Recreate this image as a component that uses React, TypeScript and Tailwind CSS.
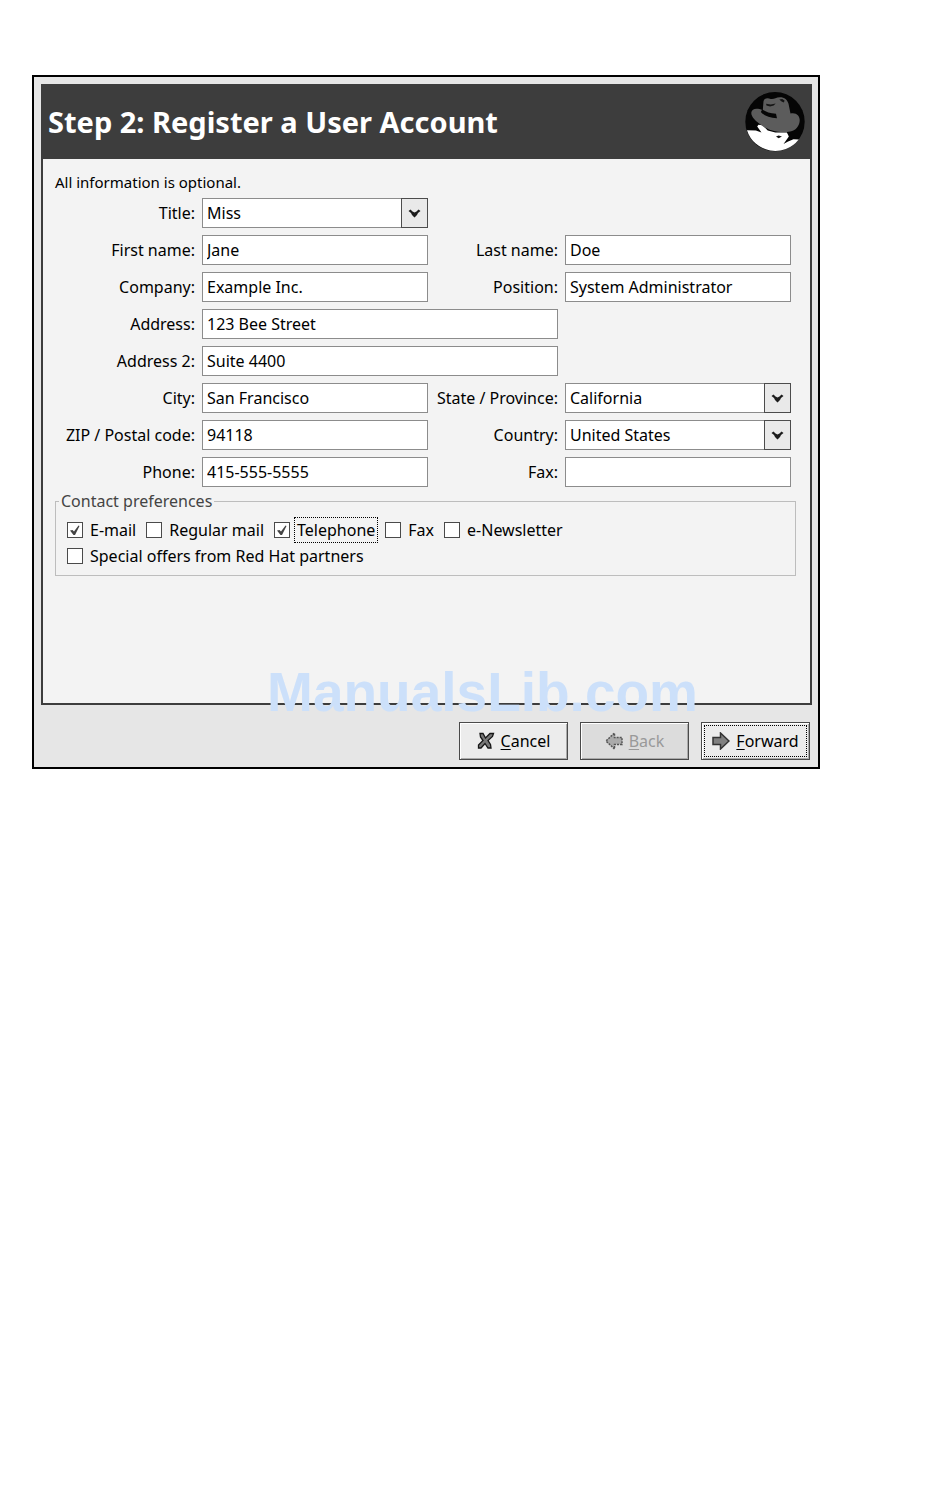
import React from 'react';

interface FieldProps {
    id: string;
    label: string;
    value: string;
    className?: string;
}

const labelClass = 'text-right whitespace-nowrap';
const boxClass =
    'h-[30px] w-full min-w-0 appearance-none rounded-none border border-[#8c8c8c] bg-white px-1 text-black outline-none';

const TextField: React.FC<FieldProps> = ({ id, label, value, className }) => (
    <>
        <label htmlFor={id} className={labelClass}>{label}</label>
        <input id={id} type="text" defaultValue={value} className={`${boxClass} ${className ?? ''}`} />
    </>
);

const SelectField: React.FC<FieldProps> = ({ id, label, value }) => (
    <>
        <label htmlFor={id} className={labelClass}>{label}</label>
        <div className="relative">
            <select id={id} defaultValue={value} className={`${boxClass} block`}>
                <option>{value}</option>
            </select>
            <span className="pointer-events-none absolute inset-y-0 right-0 flex w-[27px] items-center justify-center border border-[#4c4c4c] bg-[#e9e9e9]">
                <svg width="13" height="9" viewBox="0 0 13 9" fill="#1c1c1c">
                    <path d="M0.500 2 L2.500 0.500 L4.500 2.500 L6.500 3.500 L8.500 2.500 L10.500 0.500 L12.500 2 L10 4 L9 6 L6.500 8.500 L4 6 L3 4Z" />
                </svg>
            </span>
        </div>
    </>
);

interface CheckProps {
    label: string;
    checked?: boolean;
    focused?: boolean;
}

const Check: React.FC<CheckProps> = ({ label, checked, focused }) => (
    <label className="flex items-center gap-1">
        <span className="relative block size-4">
            <input
                type="checkbox"
                defaultChecked={checked}
                className="peer block size-4 appearance-none border border-[#4a4a4a] bg-white"
            />
            <svg viewBox="0 0 16 16" className="pointer-events-none absolute inset-0 hidden size-4 peer-checked:block">
                <path d="M3 8.500 L5.500 8 L7 9.500 L11.500 3.500 L12.500 4 L8 13 L6.500 13Z" fill="#444" />
            </svg>
        </span>
        <span className={`border border-dotted px-0.5 leading-6 ${focused ? 'border-black' : 'border-transparent'}`}>
            {label}
        </span>
    </label>
);

const HatLogo = () => (
    <svg viewBox="43 63 182 182" className="size-[60px] shrink-0" aria-hidden="true">
        <circle cx="134" cy="153" r="90" fill="#050505" />
        <path d="M49 179 L76 180 L93 186 L80 168 L84 162 L96 164 L112 180 L135 186 L170 186 L176 198 L160 221 L172 214 L190 206 L206 207 A90 90 0 0 1 49 179Z" fill="#fff" />
        <path d="M97 118 L99 92 C101 82 110 80 121 84 C131 86 136 79 149 79 C163 79 172 87 175 99 L181 128 C198 124 209 134 209 148 C209 166 196 181 180 183 C150 188 118 181 96 166 C76 152 62 140 62 126 C64 113 78 111 97 118Z" fill="#5c5c5c" />
        <path d="M95 116 C106 123 120 128 137 129 L140 143 C119 142 101 136 91 124Z" fill="#050505" />
        <path d="M107 99 L121 101 L136 98 L130 104 L119 107 L108 104Z M147 86 L156 84 L163 89 L161 95 L154 92Z" fill="#151515" />
        <path d="M137 198 L145 195 L155 198 L145 203Z" fill="#111" />
    </svg>
);

const CancelIcon = () => (
    <svg width="18" height="18" viewBox="0 0 18 18" aria-hidden="true">
        <path d="M3 1.500 H6 L8.500 6 L13 1.500 H16.500 L15.500 4.500 L11 8.500 L13.500 12.500 L14 16 H11 L8 11.500 L4 16 H1.500 V13 L6 8.500 L3.500 5Z" fill="#777" stroke="#161616" strokeWidth="1.300" />
    </svg>
);

const ArrowIcon: React.FC<{ back?: boolean }> = ({ back }) => (
    <svg width="18" height="18" viewBox="0 0 18 18" aria-hidden="true" className={back ? 'rotate-180' : ''}>
        <path d="M1 5.500 H8.500 V1 L17 9 L8.500 17 V12.500 H1Z" fill={back ? '#aaa' : '#808080'} stroke={back ? '#555' : '#333'} strokeWidth="1.500" strokeDasharray={back ? '2 1' : undefined} />
    </svg>
);

const buttonClass =
    'flex h-[38px] w-[109px] items-center justify-center gap-1.5 border border-[#4a4a4a] shadow-[inset_1px_1px_0_#fff,inset_-1px_-1px_0_#aaa]';

const App = () => (
    <main className="min-h-screen bg-white pt-[75px] pr-[130px] pl-8 text-[16px] leading-5 text-black [font-family:'Noto_Sans','Open_Sans',sans-serif]">
        <section className="relative border-2 border-black bg-[#e6e6e6] pt-[7px] pr-1.5 pb-[7px] pl-[7px]">
            <div className="border-2 border-t-0 border-[#3d3d3d] bg-[#f3f3f3]">
                <header className="flex h-[75px] items-center justify-between bg-[#3d3d3d] px-[5px] text-white">
                    <h1 className="text-[29px] leading-9 font-bold">Step 2: Register a User Account</h1>
                    <HatLogo />
                </header>

                <form className="min-h-[544px] pt-[11px] pr-[14px] pl-3">
                    <p className="text-[15px] leading-6">All information is optional.</p>

                    <div className="mt-1 mr-[5px] grid grid-cols-[140px_1fr_123px_1fr] items-center gap-[7px]">
                        <SelectField id="title" label="Title:" value="Miss" />
                        <div className="col-span-2" />
                        <TextField id="first" label="First name:" value="Jane" />
                        <TextField id="last" label="Last name:" value="Doe" />
                        <TextField id="company" label="Company:" value="Example Inc." />
                        <TextField id="position" label="Position:" value="System Administrator" />
                        <TextField id="address" label="Address:" value="123 Bee Street" className="col-span-2" />
                        <div />
                        <TextField id="address2" label="Address 2:" value="Suite 4400" className="col-span-2" />
                        <div />
                        <TextField id="city" label="City:" value="San Francisco" />
                        <SelectField id="state" label="State / Province:" value="California" />
                        <TextField id="zip" label="ZIP / Postal code:" value="94118" />
                        <SelectField id="country" label="Country:" value="United States" />
                        <TextField id="phone" label="Phone:" value="415-555-5555" />
                        <TextField id="fax" label="Fax:" value="" />
                    </div>

                    <fieldset className="mt-1 border border-[#bdbdbd] px-[11px] pt-1.5 pb-1.5">
                        <legend className="-ml-2 px-0.5 text-[#444]">Contact preferences</legend>
                        <div className="flex flex-wrap gap-x-[7px]">
                            <Check label="E-mail" checked />
                            <Check label="Regular mail" />
                            <Check label="Telephone" checked focused />
                            <Check label="Fax" />
                            <Check label="e-Newsletter" />
                        </div>
                        <Check label="Special offers from Red Hat partners" />
                    </fieldset>
                </form>
            </div>

            <footer className="mt-[17px] flex justify-end gap-3 pr-0.5">
                <button type="button" className={`${buttonClass} bg-[#ececec]`}>
                    <CancelIcon />
                    <span><u className="underline-offset-2">C</u>ancel</span>
                </button>
                <button type="button" disabled className={`${buttonClass} bg-[#dcdcdc] text-[#999]`}>
                    <ArrowIcon back />
                    <span><u className="underline-offset-2">B</u>ack</span>
                </button>
                <button type="button" className={`${buttonClass} bg-[#ececec] outline-1 -outline-offset-4 outline-dotted outline-black`}>
                    <ArrowIcon />
                    <span><u className="underline-offset-2">F</u>orward</span>
                </button>
            </footer>

            <div className="pointer-events-none absolute right-[120px] bottom-[45px] text-[55px] leading-[60px] font-bold text-[#cce0fa] [font-family:'Liberation_Sans',Arial,sans-serif]">
                ManualsLib.com
            </div>
        </section>
    </main>
);

export default App;
